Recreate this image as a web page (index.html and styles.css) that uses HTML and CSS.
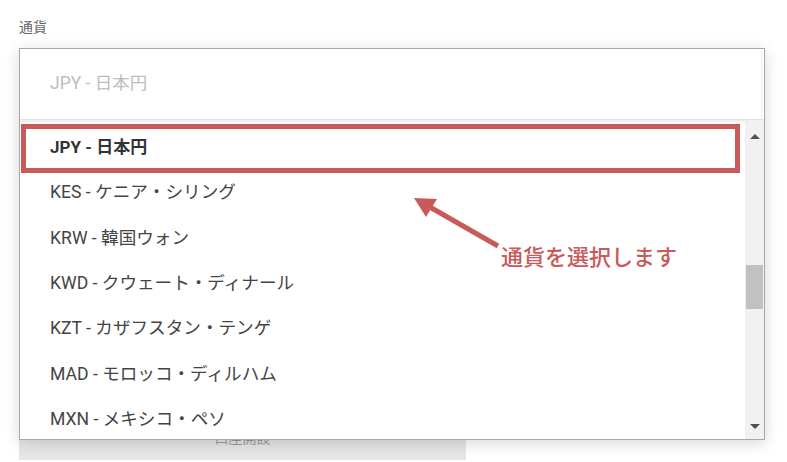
FILE: index.html
```html
<!DOCTYPE html>
<html lang="ja">
<head>
<meta charset="utf-8">
<title>通貨</title>
<link rel="stylesheet" href="styles.css">
</head>
<body>
<div class="page">
  <div class="label">通貨</div>
  <div class="field">
    <div class="form-rest">
      <button class="submit" type="button">口座開設</button>
    </div>
    <div class="dropdown">
      <div class="search">
        <div class="search-input">JPY - 日本円</div>
      </div>
      <div class="list-wrap">
        <ul class="list">
          <li class="item selected">JPY - 日本円</li>
          <li class="item">KES - ケニア・シリング</li>
          <li class="item">KRW - 韓国ウォン</li>
          <li class="item">KWD - クウェート・ディナール</li>
          <li class="item">KZT - カザフスタン・テンゲ</li>
          <li class="item">MAD - モロッコ・ディルハム</li>
          <li class="item">MXN - メキシコ・ペソ</li>
        </ul>
        <div class="scrollbar">
          <div class="sb-btn"><span class="tri up"></span></div>
          <div class="track"><div class="thumb"></div></div>
          <div class="sb-btn"><span class="tri down"></span></div>
        </div>
      </div>
    </div>
  </div>
</div>
<div class="highlight"></div>
<svg class="annot-arrow" width="787" height="462" viewBox="0 0 787 462">
  <line x1="498" y1="246" x2="428" y2="206" stroke="#c95a5a" stroke-width="5"/>
  <polygon points="414,198 437,199 426,217" fill="#c95a5a"/>
</svg>
<div class="annot-text">通貨を選択します</div>
</body>
</html>
```
FILE: styles.css
```css
html, body {
  margin: 0;
  padding: 0;
  background: #ffffff;
}
body {
  width: 787px;
  height: 462px;
  overflow: hidden;
  position: relative;
  font-family: "Roboto", "Noto Sans CJK JP", sans-serif;
}
.page {
  padding: 16px 0 0 19px;
}
.label {
  font-size: 14px;
  line-height: 20px;
  color: #666666;
  font-family: "Noto Sans CJK JP", sans-serif;
}
.field {
  position: relative;
  margin-top: 12px;
}
.form-rest {
  padding-top: 366px;
}
.submit {
  display: block;
  width: 447px;
  height: 46px;
  border: none;
  background: #e6e6e6;
  color: #9a9a9a;
  font-family: "Noto Sans CJK JP", sans-serif;
  font-size: 14px;
  padding: 0;
}
.dropdown {
  position: absolute;
  top: 0;
  left: 0;
  width: 746px;
  height: 392px;
  box-sizing: border-box;
  border: 1px solid #a8a8a8;
  background: #ffffff;
  box-shadow: 0 3px 14px rgba(0, 0, 0, 0.16);
  display: flex;
  flex-direction: column;
}
.search {
  height: 71px;
  padding: 1px 2px 0 0;
  box-sizing: border-box;
  border-bottom: 1px solid #e3e3e3;
  display: flex;
}
.search-input {
  flex: 1;
  border-right: 1px solid #efefef;
  display: flex;
  align-items: center;
  padding: 0 0 7px 30px;
  font-size: 17.5px;
  color: #bdbdbd;
}
.list-wrap {
  flex: 1;
  display: flex;
  overflow: hidden;
  border-top: 2px solid #f0f0f0;
}
.list {
  flex: 1;
  list-style: none;
  margin: 0;
  padding: 1px 0 0 0;
  overflow: hidden;
}
.item {
  height: 45.33px;
  display: flex;
  align-items: center;
  padding-left: 30px;
  font-size: 17.6px;
  color: #444444;
}
.item.selected {
  font-size: 17px;
  font-weight: 700;
  color: #333333;
}
.scrollbar {
  width: 19px;
  background: #f1f1f1;
  display: flex;
  flex-direction: column;
}
.sb-btn {
  height: 29px;
  display: flex;
  align-items: center;
  justify-content: center;
}
.sb-btn:last-child {
  height: 26px;
}
.track {
  flex: 1;
}
.thumb {
  margin: 114px 1px 0 1px;
  height: 44px;
  background: #c1c1c1;
}
.tri {
  width: 0;
  height: 0;
  border-left: 5px solid transparent;
  border-right: 5px solid transparent;
}
.tri.up {
  border-bottom: 5px solid #505050;
}
.tri.down {
  border-top: 5px solid #505050;
}
.highlight {
  position: absolute;
  left: 21px;
  top: 124px;
  width: 719px;
  height: 49px;
  box-sizing: border-box;
  border: 5px solid #c95a5a;
}
.annot-arrow {
  position: absolute;
  left: 0;
  top: 0;
}
.annot-text {
  position: absolute;
  left: 501px;
  top: 240px;
  font-family: "Noto Sans CJK JP", sans-serif;
  font-size: 22px;
  line-height: 30px;
  font-weight: 500;
  color: #c95a5a;
}
```
